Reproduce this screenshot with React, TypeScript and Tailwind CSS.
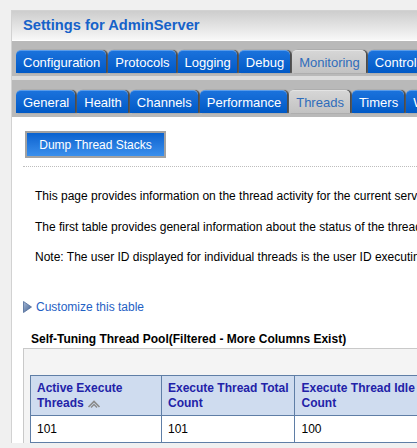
import type { ReactNode } from 'react';

const font = { fontFamily: '"Liberation Sans", Arial, sans-serif' };

interface TabProps {
  label: string;
  active?: boolean;
}

function Tab({ label, active }: TabProps) {
  return (
    <div
      className={`flex h-[23px] flex-none items-center whitespace-nowrap rounded-t-[5px] pl-[7px] pr-[6px] text-[13px] leading-none shadow-[2px_0_1px_rgba(40,40,40,0.75)] ${
        active
          ? 'border-t border-[#e4e4e4] bg-gradient-to-b from-[#d6d6d6] to-[#c2c2c2] text-[#2f6cbb]'
          : 'border-t border-[#5a9cea] bg-gradient-to-b from-[#1a72dc] to-[#0059c6] text-white'
      }`}
    >
      {label}
    </div>
  );
}

function TabBar({ tabs, active, className }: { tabs: string[]; active: string; className: string }) {
  return (
    <div className={`flex items-end gap-[2px] overflow-hidden bg-[#b9b9b9] pl-[4px] ${className}`}>
      {tabs.map((tab) => (
        <Tab key={tab} label={tab} active={tab === active} />
      ))}
    </div>
  );
}

function HeaderCell({ children, width }: { children: ReactNode; width: string }) {
  return (
    <th
      className={`${width} whitespace-nowrap border border-[#5f7ea6] px-[6px] pb-[4px] pt-[5px] text-left align-top text-[12px] font-bold leading-[15px] text-[#2222a8]`}
    >
      {children}
    </th>
  );
}

export default function App() {
  return (
    <div className="h-[448px] w-[417px] overflow-hidden bg-[#f0f0f0] pl-[11px] pt-[10px]" style={font}>
      <div className="w-[760px] border-l border-t border-[#d2d2d2] bg-white">
        <div className="flex h-[29px] items-center bg-gradient-to-b from-[#cdcdcd] to-[#f8f8f8] pl-[11px] text-[14.7px] font-bold text-[#1662c9]">
          Settings for AdminServer
        </div>
        <div className="h-px bg-white" />
        <TabBar
          className="h-[35px] pb-[3px]"
          active="Monitoring"
          tabs={['Configuration', 'Protocols', 'Logging', 'Debug', 'Monitoring', 'Control', 'Deployments', 'Services']}
        />
        <div className="h-[4px] bg-[#dcdcdc]" />
        <TabBar
          className="h-[37px] pb-[4px]"
          active="Threads"
          tabs={['General', 'Health', 'Channels', 'Performance', 'Threads', 'Timers', 'Workload', 'Jobs']}
        />

        <div className="pl-[11px] pt-[14px]">
          <button
            type="button"
            className="ml-[2px] flex h-[27px] w-[141px] items-center justify-center border-2 border-[#a2a2a2] bg-gradient-to-b from-[#0862cf] to-[#3a8fec] text-[12px] text-white"
          >
            Dump Thread Stacks
          </button>
          <div className="mt-[8px] border-t border-dotted border-[#bdbdbd]" />

          <div className="ml-[12px] text-[12px] leading-[14px] text-black">
            <p className="mt-[22px] whitespace-nowrap">
              This page provides information on the thread activity for the current server.
            </p>
            <p className="mt-[17px] whitespace-nowrap">
              The first table provides general information about the status of the thread pool.
            </p>
            <p className="mt-[16px] whitespace-nowrap">
              Note: The user ID displayed for individual threads is the user ID executing the work.
            </p>
          </div>

          <div className="mt-[36px] flex items-center gap-[4px] text-[12px] leading-[14px] text-[#1f61c4]">
            <svg width="9" height="12" viewBox="0 0 9 12">
              <defs>
                <linearGradient id="tri" x1="0" y1="0" x2="1" y2="1">
                  <stop offset="0" stopColor="#a9bcd8" />
                  <stop offset="1" stopColor="#3d5c8e" />
                </linearGradient>
              </defs>
              <path d="M0.5 0.5 L8.5 6 L0.5 11.5 Z" fill="url(#tri)" stroke="#4d6a98" strokeWidth="0.8" />
            </svg>
            <span>Customize this table</span>
          </div>

          <div className="ml-[8px] mt-[18px] whitespace-nowrap text-[12px] font-bold leading-[14px] text-black">
            Self-Tuning Thread Pool(Filtered - More Columns Exist)
          </div>

          <div className="mt-[2px] border-l border-t border-[#c9c9c9] bg-[#f4f4f4] pl-[6px] pt-[26px]">
            <table className="table-fixed border-collapse">
              <thead>
                <tr className="h-[40px] bg-[#cfdcef]">
                  <HeaderCell width="w-[131px]">
                    Active Execute
                    <br />
                    <span className="inline-flex items-center gap-[3px]">
                      Threads
                      <svg width="14" height="10" viewBox="0 0 14 10">
                        <path d="M1.5 8 L7 2.5 L12.5 8" fill="none" stroke="#8a8a8a" strokeWidth="1.6" />
                        <path d="M4 8.5 L7 5.5 L10 8.5" fill="none" stroke="#8a8a8a" strokeWidth="1.4" />
                      </svg>
                    </span>
                  </HeaderCell>
                  <HeaderCell width="w-[132px]">
                    Execute Thread Total
                    <br />
                    Count
                  </HeaderCell>
                  <HeaderCell width="w-[150px]">
                    Execute Thread Idle
                    <br />
                    Count
                  </HeaderCell>
                  <HeaderCell width="w-[150px]">
                    Execute Thread
                    <br />
                    Queue Length
                  </HeaderCell>
                </tr>
              </thead>
              <tbody>
                <tr className="h-[27px] bg-white text-[12px] text-black">
                  <td className="border border-[#5f7ea6] px-[6px]">101</td>
                  <td className="border border-[#5f7ea6] px-[6px]">101</td>
                  <td className="border border-[#5f7ea6] px-[6px]">100</td>
                  <td className="border border-[#5f7ea6] px-[6px]">0</td>
                </tr>
              </tbody>
            </table>
          </div>
        </div>
      </div>
    </div>
  );
}
